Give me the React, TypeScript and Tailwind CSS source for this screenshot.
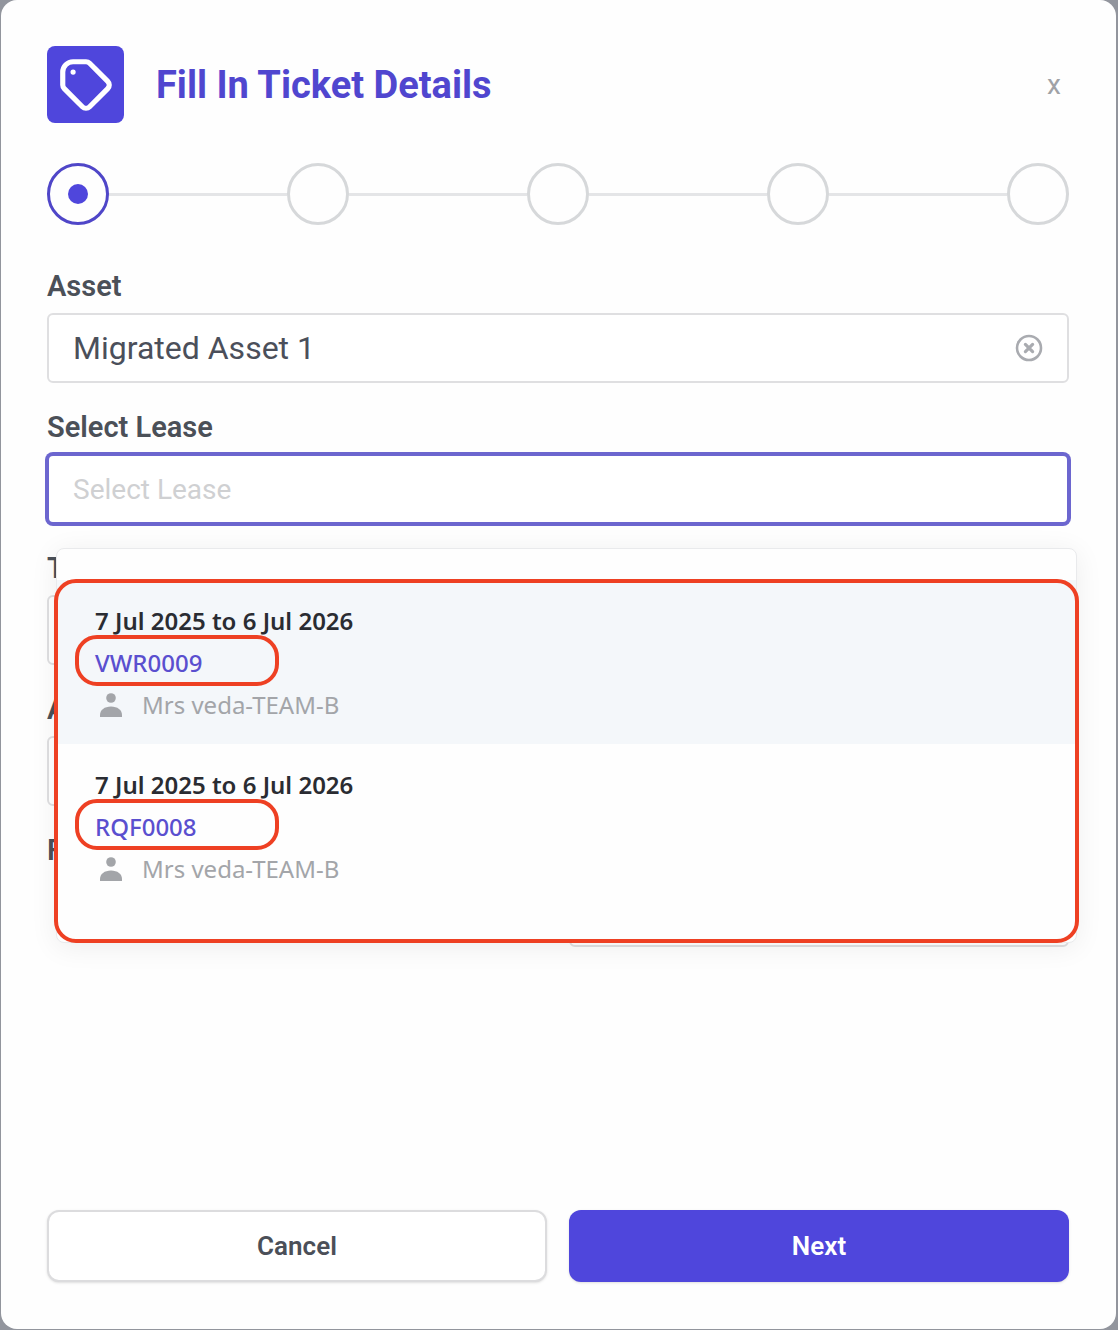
import { useState } from 'react';
import clsx from 'clsx';

type Lease = {
    id: string;
    period: string;
    tenant: string;
};

const STEPS = ['Details', 'Description', 'Schedule', 'Attachments', 'Review'];

const LEASES: Lease[] = [
    { id: 'VWR0009', period: '7 Jul 2025 to 6 Jul 2026', tenant: 'Mrs veda-TEAM-B' },
    { id: 'RQF0008', period: '7 Jul 2025 to 6 Jul 2026', tenant: 'Mrs veda-TEAM-B' },
];

const labelStyles = 'flex h-11 items-center pb-[10px] text-[29px] leading-8 font-semibold text-[#4b5058]';
const inputStyles = 'h-[70px] w-full rounded-md border-2 bg-white px-6 outline-none';
const idleBorder = 'border-[#dfdfe1]';

function TagIcon() {
    return (
        <svg width="62" height="62" viewBox="0 0 24 24" fill="none" stroke="currentColor" strokeWidth="2" strokeLinecap="round" strokeLinejoin="round">
            <path d="M7 7h.01M7 3h5c.512 0 1.024.195 1.414.586l7 7a2 2 0 010 2.828l-7 7a2 2 0 01-2.828 0l-7-7A1.994 1.994 0 013 12V7a4 4 0 014-4z" />
        </svg>
    );
}

function ClearIcon() {
    return (
        <svg width="28" height="28" viewBox="0 0 28 28" fill="none" stroke="currentColor" strokeLinecap="round">
            <circle cx="14" cy="14" r="12" strokeWidth="2.6" />
            <path d="M10.400 10.400l7.200 7.200M17.600 10.400l-7.200 7.200" strokeWidth="3.2" />
        </svg>
    );
}

function PersonIcon() {
    return (
        <svg width="22" height="24" viewBox="0 0 22 24" fill="currentColor">
            <circle cx="11" cy="5" r="4.8" />
            <path d="M0 24v-2c0-5 4.500-8.500 11-8.500s11 3.500 11 8.500v2z" />
        </svg>
    );
}

function Stepper({ current }: { current: number }) {
    return (
        <ol className="mt-10 flex items-center">
            {STEPS.map((step, i) => (
                <li key={step} aria-label={step} className={clsx('flex items-center', i > 0 && 'flex-1')}>
                    {i > 0 && <span className="h-[3px] flex-1 bg-[#e4e5e7]" />}
                    <span
                        className={clsx(
                            'flex size-[62px] items-center justify-center rounded-full border-3',
                            i === current ? 'border-[#4f46c8]' : 'border-[#d6d8da]',
                        )}
                    >
                        {i === current && <span className="size-5 rounded-full bg-[#4f46dc]" />}
                    </span>
                </li>
            ))}
        </ol>
    );
}

function LeaseOption({ lease, active }: { lease: Lease; active: boolean }) {
    return (
        <li
            role="option"
            aria-selected={active}
            className={clsx('pt-5 pb-[18px] pl-[38px] text-2xl leading-[42px]', active && 'bg-[#f4f7fa]')}
        >
            <p className="font-semibold text-[#2a2c32]">{lease.period}</p>
            <p className="relative font-medium text-[#5a4fcf]">
                {lease.id}
                <span className="absolute -top-[7px] -left-5 h-[51px] w-[204px] rounded-[22px] border-4 border-[#ee4023]" />
            </p>
            <p className="flex items-center gap-5 pl-[5px] text-[#a3a5a9]">
                <PersonIcon />
                {lease.tenant}
            </p>
        </li>
    );
}

export default function App() {
    const [asset, setAsset] = useState<string>('Migrated Asset 1');
    const [search, setSearch] = useState<string>('');

    return (
        <div className="flex min-h-screen bg-[#92959d] pr-0.5 pb-px pl-px font-['Roboto',sans-serif]">
            <form
                className="flex flex-1 flex-col rounded-2xl bg-[#fefefe] pt-[46px] pr-[47px] pb-[47px] pl-[46px]"
                onSubmit={(e) => e.preventDefault()}
            >
                <header className="flex items-center">
                    <div className="flex size-[77px] items-center justify-center rounded-lg bg-[#4f46dc] text-white">
                        <TagIcon />
                    </div>
                    <h1 className="ml-8 flex-1 text-[38px] leading-10 font-bold text-[#5046cf]">Fill In Ticket Details</h1>
                    <button type="button" aria-label="Close" className="px-2 text-[28px] leading-8 text-[#a0a2a6]">
                        x
                    </button>
                </header>

                <Stepper current={0} />

                <div className="mt-11 flex flex-col gap-[27px]">
                    <div>
                        <label htmlFor="asset" className={labelStyles}>Asset</label>
                        <div className="relative">
                            <input
                                id="asset"
                                value={asset}
                                onChange={(e) => setAsset(e.target.value)}
                                className={clsx(inputStyles, idleBorder, 'text-[32px] text-[#4b4f5a]')}
                            />
                            <button
                                type="button"
                                aria-label="Clear asset"
                                onClick={() => setAsset('')}
                                className="absolute inset-y-0 right-[26px] text-[#a9abb0]"
                            >
                                <ClearIcon />
                            </button>
                        </div>
                    </div>

                    <div>
                        <label htmlFor="lease" className={labelStyles}>Select Lease</label>
                        <div className="relative">
                            <input
                                id="lease"
                                value={search}
                                placeholder="Select Lease"
                                onChange={(e) => setSearch(e.target.value)}
                                className={clsx(inputStyles, 'border-[#6c66cf] text-[28px] text-[#4b4f5a] ring-2 ring-[#6c66cf] placeholder:text-[#cfd0d2]')}
                            />
                            <div className="absolute top-full -right-2 left-[9px] z-10 mt-6 rounded-lg border border-[#e9eaec] bg-[#fefefe] pt-[31px] font-['Noto_Sans',sans-serif] shadow-[0_4px_28px_rgba(0,0,0,0.07)]">
                                <ul role="listbox" aria-label="Leases" className="pb-[34px]">
                                    {LEASES.map((lease, i) => (
                                        <LeaseOption key={lease.id} lease={lease} active={i === 0} />
                                    ))}
                                </ul>
                                <span className="absolute top-[30px] -right-[3px] -bottom-px -left-[3px] rounded-[22px] border-4 border-[#ee4023]" />
                            </div>
                        </div>
                    </div>

                    <div>
                        <label htmlFor="type" className={labelStyles}>Type</label>
                        <input id="type" className={clsx(inputStyles, idleBorder)} />
                    </div>

                    <div>
                        <label htmlFor="area" className={labelStyles}>Area</label>
                        <input id="area" className={clsx(inputStyles, idleBorder)} />
                    </div>

                    <div className="grid grid-cols-2 gap-[22px]">
                        <label htmlFor="for" className={labelStyles}>For</label>
                        <input id="for" className={clsx(inputStyles, idleBorder, 'mt-11')} />
                    </div>
                </div>

                <footer className="mt-auto grid grid-cols-2 gap-[22px] text-[26px] font-semibold">
                    <button type="button" className="h-[72px] rounded-xl border-2 border-[#dcdcde] bg-white text-[#4b4f58] shadow-sm">
                        Cancel
                    </button>
                    <button type="submit" className="h-[72px] rounded-xl bg-[#4f46dc] text-white shadow-sm">
                        Next
                    </button>
                </footer>
            </form>
        </div>
    );
}
